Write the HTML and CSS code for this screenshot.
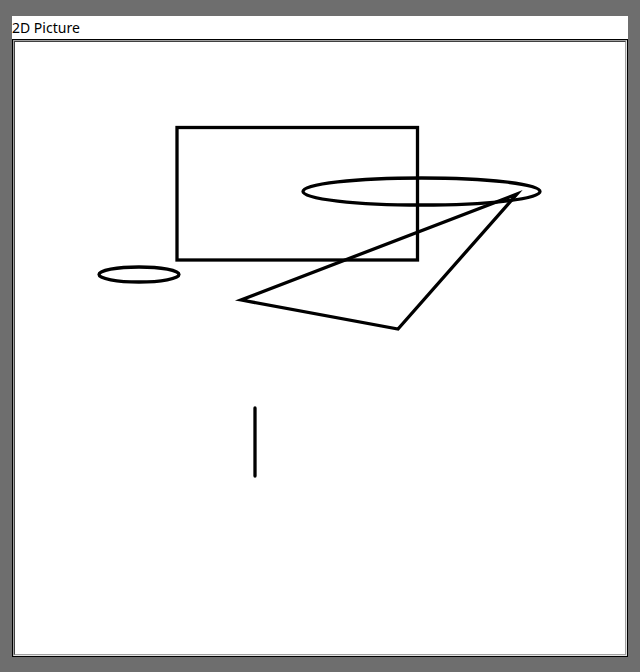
FILE: index.html
```html
<!DOCTYPE html>
<html>
<head>
<meta charset="utf-8">
<title>2D Picture</title>
<link rel="stylesheet" href="styles.css">
</head>
<body>
<div class="window">
  <div class="title">2D Picture</div>
  <div class="frame">
    <div class="bevel">
      <div class="canvas">
        <svg class="drawing" viewBox="15 42 610 612" width="610" height="612">
          <g fill="none" stroke="#000" stroke-width="3.3">
            <rect x="177" y="127.5" width="240.5" height="132.5" stroke-linejoin="miter"/>
            <ellipse cx="421.5" cy="191.5" rx="118.5" ry="13.5"/>
            <ellipse cx="139" cy="274.5" rx="40" ry="7.5"/>
            <polygon points="241,300 398,329 517,194" stroke-linejoin="miter" stroke-miterlimit="20"/>
            <line x1="255" y1="408" x2="255" y2="476" stroke-linecap="round"/>
          </g>
        </svg>
      </div>
    </div>
  </div>
</div>
</body>
</html>
```
FILE: styles.css
```css
html, body {
  margin: 0;
  padding: 0;
  background: #6e6e6e;
  width: 640px;
  height: 672px;
  overflow: hidden;
}

.window {
  margin: 16px 0 0 12px;
  width: 616px;
  display: flex;
  flex-direction: column;
}

.title {
  height: 23px;
  background: #ffffff;
  color: #000;
  font-family: "Noto Sans", "Open Sans", sans-serif;
  font-size: 14px;
  line-height: 23px;
  padding-left: 0;
  box-sizing: border-box;
}

.frame {
  height: 618px;
  box-sizing: border-box;
  border: 1px solid #000;
  background: #fff;
}

.bevel {
  height: 100%;
  box-sizing: border-box;
  border-style: solid;
  border-width: 1px;
  border-color: #a0a0a0 #e3e3e3 #e3e3e3 #a0a0a0;
}

.canvas {
  height: 100%;
  box-sizing: border-box;
  border-style: solid;
  border-width: 1px;
  border-color: #404040 #a0a0a0 #a0a0a0 #404040;
  background: #fff;
}

.drawing {
  display: block;
}
```
